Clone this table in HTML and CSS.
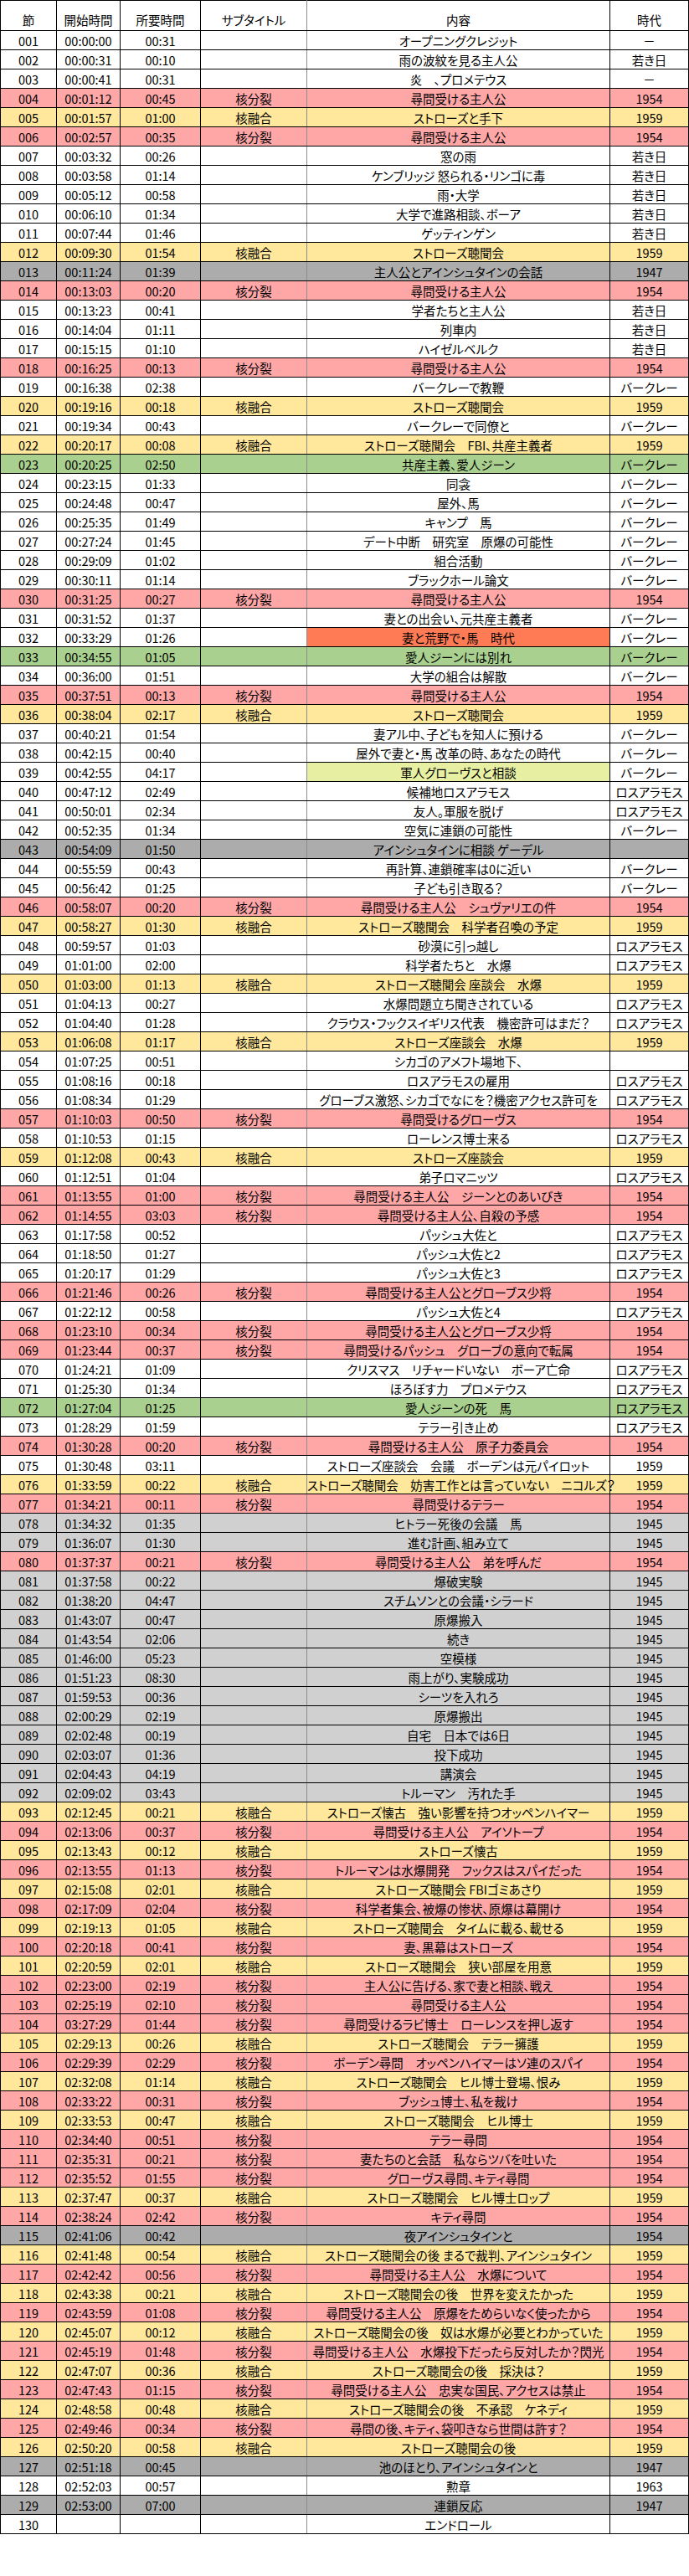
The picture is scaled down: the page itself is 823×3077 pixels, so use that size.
FILE: index.html
```html
<!DOCTYPE html>
<html lang="ja">
<head>
<meta charset="utf-8">
<title>シーン一覧</title>
<link rel="stylesheet" href="styles.css">
</head>
<body>
<table class="scenes">
<colgroup><col class="c-no"><col class="c-start"><col class="c-dur"><col class="c-sub"><col class="c-desc"><col class="c-era"></colgroup>
<thead>
<tr class="head"><th>節</th><th>開始時間</th><th>所要時間</th><th>サブタイトル</th><th>内容</th><th>時代</th></tr>
</thead>
<tbody>
<tr><td>001</td><td>00:00:00</td><td>00:31</td><td></td><td>オープニングクレジット</td><td>－</td></tr>
<tr><td>002</td><td>00:00:31</td><td>00:10</td><td></td><td>雨の波紋を見る主人公</td><td>若き日</td></tr>
<tr><td>003</td><td>00:00:41</td><td>00:31</td><td></td><td>炎　、プロメテウス</td><td>－</td></tr>
<tr class="r-p"><td>004</td><td>00:01:12</td><td>00:45</td><td>核分裂</td><td>尋問受ける主人公</td><td>1954</td></tr>
<tr class="r-y"><td>005</td><td>00:01:57</td><td>01:00</td><td>核融合</td><td>ストローズと手下</td><td>1959</td></tr>
<tr class="r-p"><td>006</td><td>00:02:57</td><td>00:35</td><td>核分裂</td><td>尋問受ける主人公</td><td>1954</td></tr>
<tr><td>007</td><td>00:03:32</td><td>00:26</td><td></td><td>窓の雨</td><td>若き日</td></tr>
<tr><td>008</td><td>00:03:58</td><td>01:14</td><td></td><td>ケンブリッジ 怒られる・リンゴに毒</td><td>若き日</td></tr>
<tr><td>009</td><td>00:05:12</td><td>00:58</td><td></td><td>雨・大学</td><td>若き日</td></tr>
<tr><td>010</td><td>00:06:10</td><td>01:34</td><td></td><td>大学で進路相談、ボーア</td><td>若き日</td></tr>
<tr><td>011</td><td>00:07:44</td><td>01:46</td><td></td><td>ゲッティンゲン</td><td>若き日</td></tr>
<tr class="r-y"><td>012</td><td>00:09:30</td><td>01:54</td><td>核融合</td><td>ストローズ聴聞会</td><td>1959</td></tr>
<tr class="r-d"><td>013</td><td>00:11:24</td><td>01:39</td><td></td><td>主人公とアインシュタインの会話</td><td>1947</td></tr>
<tr class="r-p"><td>014</td><td>00:13:03</td><td>00:20</td><td>核分裂</td><td>尋問受ける主人公</td><td>1954</td></tr>
<tr><td>015</td><td>00:13:23</td><td>00:41</td><td></td><td>学者たちと主人公</td><td>若き日</td></tr>
<tr><td>016</td><td>00:14:04</td><td>01:11</td><td></td><td>列車内</td><td>若き日</td></tr>
<tr><td>017</td><td>00:15:15</td><td>01:10</td><td></td><td>ハイゼルベルク</td><td>若き日</td></tr>
<tr class="r-p"><td>018</td><td>00:16:25</td><td>00:13</td><td>核分裂</td><td>尋問受ける主人公</td><td>1954</td></tr>
<tr><td>019</td><td>00:16:38</td><td>02:38</td><td></td><td>バークレーで教鞭</td><td>バークレー</td></tr>
<tr class="r-y"><td>020</td><td>00:19:16</td><td>00:18</td><td>核融合</td><td>ストローズ聴聞会</td><td>1959</td></tr>
<tr><td>021</td><td>00:19:34</td><td>00:43</td><td></td><td>バークレーで同僚と</td><td>バークレー</td></tr>
<tr class="r-y"><td>022</td><td>00:20:17</td><td>00:08</td><td>核融合</td><td>ストローズ聴聞会　FBI、共産主義者</td><td>1959</td></tr>
<tr class="r-g"><td>023</td><td>00:20:25</td><td>02:50</td><td></td><td>共産主義、愛人ジーン</td><td>バークレー</td></tr>
<tr><td>024</td><td>00:23:15</td><td>01:33</td><td></td><td>同衾</td><td>バークレー</td></tr>
<tr><td>025</td><td>00:24:48</td><td>00:47</td><td></td><td>屋外、馬</td><td>バークレー</td></tr>
<tr><td>026</td><td>00:25:35</td><td>01:49</td><td></td><td>キャンプ　馬</td><td>バークレー</td></tr>
<tr><td>027</td><td>00:27:24</td><td>01:45</td><td></td><td>デート中断　研究室　原爆の可能性</td><td>バークレー</td></tr>
<tr><td>028</td><td>00:29:09</td><td>01:02</td><td></td><td>組合活動</td><td>バークレー</td></tr>
<tr><td>029</td><td>00:30:11</td><td>01:14</td><td></td><td>ブラックホール論文</td><td>バークレー</td></tr>
<tr class="r-p"><td>030</td><td>00:31:25</td><td>00:27</td><td>核分裂</td><td>尋問受ける主人公</td><td>1954</td></tr>
<tr><td>031</td><td>00:31:52</td><td>01:37</td><td></td><td>妻との出会い、元共産主義者</td><td>バークレー</td></tr>
<tr><td>032</td><td>00:33:29</td><td>01:26</td><td></td><td class="c-orange">妻と荒野で・馬　時代</td><td>バークレー</td></tr>
<tr class="r-g"><td>033</td><td>00:34:55</td><td>01:05</td><td></td><td>愛人ジーンには別れ</td><td>バークレー</td></tr>
<tr><td>034</td><td>00:36:00</td><td>01:51</td><td></td><td>大学の組合は解散</td><td>バークレー</td></tr>
<tr class="r-p"><td>035</td><td>00:37:51</td><td>00:13</td><td>核分裂</td><td>尋問受ける主人公</td><td>1954</td></tr>
<tr class="r-y"><td>036</td><td>00:38:04</td><td>02:17</td><td>核融合</td><td>ストローズ聴聞会</td><td>1959</td></tr>
<tr><td>037</td><td>00:40:21</td><td>01:54</td><td></td><td>妻アル中、子どもを知人に預ける</td><td>バークレー</td></tr>
<tr><td>038</td><td>00:42:15</td><td>00:40</td><td></td><td>屋外で妻と・馬 改革の時、あなたの時代</td><td>バークレー</td></tr>
<tr><td>039</td><td>00:42:55</td><td>04:17</td><td></td><td class="c-lime">軍人グローヴスと相談</td><td>バークレー</td></tr>
<tr><td>040</td><td>00:47:12</td><td>02:49</td><td></td><td>候補地ロスアラモス</td><td>ロスアラモス</td></tr>
<tr><td>041</td><td>00:50:01</td><td>02:34</td><td></td><td>友人。軍服を脱げ</td><td>ロスアラモス</td></tr>
<tr><td>042</td><td>00:52:35</td><td>01:34</td><td></td><td>空気に連鎖の可能性</td><td>バークレー</td></tr>
<tr class="r-d"><td>043</td><td>00:54:09</td><td>01:50</td><td></td><td>アインシュタインに相談 ゲーデル</td><td></td></tr>
<tr><td>044</td><td>00:55:59</td><td>00:43</td><td></td><td>再計算、連鎖確率は0に近い</td><td>バークレー</td></tr>
<tr><td>045</td><td>00:56:42</td><td>01:25</td><td></td><td>子ども引き取る？</td><td>バークレー</td></tr>
<tr class="r-p"><td>046</td><td>00:58:07</td><td>00:20</td><td>核分裂</td><td>尋問受ける主人公　シュヴァリエの件</td><td>1954</td></tr>
<tr class="r-y"><td>047</td><td>00:58:27</td><td>01:30</td><td>核融合</td><td>ストローズ聴聞会　科学者召喚の予定</td><td>1959</td></tr>
<tr><td>048</td><td>00:59:57</td><td>01:03</td><td></td><td>砂漠に引っ越し</td><td>ロスアラモス</td></tr>
<tr><td>049</td><td>01:01:00</td><td>02:00</td><td></td><td>科学者たちと　水爆</td><td>ロスアラモス</td></tr>
<tr class="r-y"><td>050</td><td>01:03:00</td><td>01:13</td><td>核融合</td><td>ストローズ聴聞会 座談会　水爆</td><td>1959</td></tr>
<tr><td>051</td><td>01:04:13</td><td>00:27</td><td></td><td>水爆問題立ち聞きされている</td><td>ロスアラモス</td></tr>
<tr><td>052</td><td>01:04:40</td><td>01:28</td><td></td><td>クラウス・フックスイギリス代表　機密許可はまだ？</td><td>ロスアラモス</td></tr>
<tr class="r-y"><td>053</td><td>01:06:08</td><td>01:17</td><td>核融合</td><td>ストローズ座談会　水爆</td><td>1959</td></tr>
<tr><td>054</td><td>01:07:25</td><td>00:51</td><td></td><td>シカゴのアメフト場地下、</td><td></td></tr>
<tr><td>055</td><td>01:08:16</td><td>00:18</td><td></td><td>ロスアラモスの雇用</td><td>ロスアラモス</td></tr>
<tr><td>056</td><td>01:08:34</td><td>01:29</td><td></td><td>グローブス激怒、シカゴでなにを？機密アクセス許可を</td><td>ロスアラモス</td></tr>
<tr class="r-p"><td>057</td><td>01:10:03</td><td>00:50</td><td>核分裂</td><td>尋問受けるグローヴス</td><td>1954</td></tr>
<tr><td>058</td><td>01:10:53</td><td>01:15</td><td></td><td>ローレンス博士来る</td><td>ロスアラモス</td></tr>
<tr class="r-y"><td>059</td><td>01:12:08</td><td>00:43</td><td>核融合</td><td>ストローズ座談会</td><td>1959</td></tr>
<tr><td>060</td><td>01:12:51</td><td>01:04</td><td></td><td>弟子ロマニッツ</td><td>ロスアラモス</td></tr>
<tr class="r-p"><td>061</td><td>01:13:55</td><td>01:00</td><td>核分裂</td><td>尋問受ける主人公　ジーンとのあいびき</td><td>1954</td></tr>
<tr class="r-p"><td>062</td><td>01:14:55</td><td>03:03</td><td>核分裂</td><td>尋問受ける主人公、自殺の予感</td><td>1954</td></tr>
<tr><td>063</td><td>01:17:58</td><td>00:52</td><td></td><td>パッシュ大佐と</td><td>ロスアラモス</td></tr>
<tr><td>064</td><td>01:18:50</td><td>01:27</td><td></td><td>パッシュ大佐と2</td><td>ロスアラモス</td></tr>
<tr><td>065</td><td>01:20:17</td><td>01:29</td><td></td><td>パッシュ大佐と3</td><td>ロスアラモス</td></tr>
<tr class="r-p"><td>066</td><td>01:21:46</td><td>00:26</td><td>核分裂</td><td>尋問受ける主人公とグローブス少将</td><td>1954</td></tr>
<tr><td>067</td><td>01:22:12</td><td>00:58</td><td></td><td>パッシュ大佐と4</td><td>ロスアラモス</td></tr>
<tr class="r-p"><td>068</td><td>01:23:10</td><td>00:34</td><td>核分裂</td><td>尋問受ける主人公とグローブス少将</td><td>1954</td></tr>
<tr class="r-p"><td>069</td><td>01:23:44</td><td>00:37</td><td>核分裂</td><td>尋問受けるパッシュ　グローブの意向で転属</td><td>1954</td></tr>
<tr><td>070</td><td>01:24:21</td><td>01:09</td><td></td><td>クリスマス　リチャードいない　ボーア亡命</td><td>ロスアラモス</td></tr>
<tr><td>071</td><td>01:25:30</td><td>01:34</td><td></td><td>ほろぼす力　プロメテウス</td><td>ロスアラモス</td></tr>
<tr class="r-g"><td>072</td><td>01:27:04</td><td>01:25</td><td></td><td>愛人ジーンの死　馬</td><td>ロスアラモス</td></tr>
<tr><td>073</td><td>01:28:29</td><td>01:59</td><td></td><td>テラー引き止め</td><td>ロスアラモス</td></tr>
<tr class="r-p"><td>074</td><td>01:30:28</td><td>00:20</td><td>核分裂</td><td>尋問受ける主人公　原子力委員会</td><td>1954</td></tr>
<tr><td>075</td><td>01:30:48</td><td>03:11</td><td></td><td>ストローズ座談会　会議　ボーデンは元パイロット</td><td>1959</td></tr>
<tr class="r-y"><td>076</td><td>01:33:59</td><td>00:22</td><td>核融合</td><td>ストローズ聴聞会　妨害工作とは言っていない　ニコルズ？</td><td>1959</td></tr>
<tr class="r-p"><td>077</td><td>01:34:21</td><td>00:11</td><td>核分裂</td><td>尋問受けるテラー</td><td>1954</td></tr>
<tr class="r-l"><td>078</td><td>01:34:32</td><td>01:35</td><td></td><td>ヒトラー死後の会議　馬</td><td>1945</td></tr>
<tr class="r-l"><td>079</td><td>01:36:07</td><td>01:30</td><td></td><td>進む計画、組み立て</td><td>1945</td></tr>
<tr class="r-p"><td>080</td><td>01:37:37</td><td>00:21</td><td>核分裂</td><td>尋問受ける主人公　弟を呼んだ</td><td>1954</td></tr>
<tr class="r-l"><td>081</td><td>01:37:58</td><td>00:22</td><td></td><td>爆破実験</td><td>1945</td></tr>
<tr class="r-l"><td>082</td><td>01:38:20</td><td>04:47</td><td></td><td>スチムソンとの会議・シラード</td><td>1945</td></tr>
<tr class="r-l"><td>083</td><td>01:43:07</td><td>00:47</td><td></td><td>原爆搬入</td><td>1945</td></tr>
<tr class="r-l"><td>084</td><td>01:43:54</td><td>02:06</td><td></td><td>続き</td><td>1945</td></tr>
<tr class="r-l"><td>085</td><td>01:46:00</td><td>05:23</td><td></td><td>空模様</td><td>1945</td></tr>
<tr class="r-l"><td>086</td><td>01:51:23</td><td>08:30</td><td></td><td>雨上がり、実験成功</td><td>1945</td></tr>
<tr class="r-l"><td>087</td><td>01:59:53</td><td>00:36</td><td></td><td>シーツを入れろ</td><td>1945</td></tr>
<tr class="r-l"><td>088</td><td>02:00:29</td><td>02:19</td><td></td><td>原爆搬出</td><td>1945</td></tr>
<tr class="r-l"><td>089</td><td>02:02:48</td><td>00:19</td><td></td><td>自宅　日本では6日</td><td>1945</td></tr>
<tr class="r-l"><td>090</td><td>02:03:07</td><td>01:36</td><td></td><td>投下成功</td><td>1945</td></tr>
<tr class="r-l"><td>091</td><td>02:04:43</td><td>04:19</td><td></td><td>講演会</td><td>1945</td></tr>
<tr class="r-l"><td>092</td><td>02:09:02</td><td>03:43</td><td></td><td>トルーマン　汚れた手</td><td>1945</td></tr>
<tr class="r-y"><td>093</td><td>02:12:45</td><td>00:21</td><td>核融合</td><td>ストローズ懐古　強い影響を持つオッペンハイマー</td><td>1959</td></tr>
<tr class="r-p"><td>094</td><td>02:13:06</td><td>00:37</td><td>核分裂</td><td>尋問受ける主人公　アイソトープ</td><td>1954</td></tr>
<tr class="r-y"><td>095</td><td>02:13:43</td><td>00:12</td><td>核融合</td><td>ストローズ懐古</td><td>1959</td></tr>
<tr class="r-p"><td>096</td><td>02:13:55</td><td>01:13</td><td>核分裂</td><td>トルーマンは水爆開発　フックスはスパイだった</td><td>1954</td></tr>
<tr class="r-y"><td>097</td><td>02:15:08</td><td>02:01</td><td>核融合</td><td>ストローズ聴聞会 FBIゴミあさり</td><td>1959</td></tr>
<tr class="r-p"><td>098</td><td>02:17:09</td><td>02:04</td><td>核分裂</td><td>科学者集会、被爆の惨状、原爆は幕開け</td><td>1954</td></tr>
<tr class="r-y"><td>099</td><td>02:19:13</td><td>01:05</td><td>核融合</td><td>ストローズ聴聞会　タイムに載る、載せる</td><td>1959</td></tr>
<tr class="r-p"><td>100</td><td>02:20:18</td><td>00:41</td><td>核分裂</td><td>妻、黒幕はストローズ</td><td>1954</td></tr>
<tr class="r-y"><td>101</td><td>02:20:59</td><td>02:01</td><td>核融合</td><td>ストローズ聴聞会　狭い部屋を用意</td><td>1959</td></tr>
<tr class="r-p"><td>102</td><td>02:23:00</td><td>02:19</td><td>核分裂</td><td>主人公に告げる、家で妻と相談、戦え</td><td>1954</td></tr>
<tr class="r-p"><td>103</td><td>02:25:19</td><td>02:10</td><td>核分裂</td><td>尋問受ける主人公</td><td>1954</td></tr>
<tr class="r-p"><td>104</td><td>03:27:29</td><td>01:44</td><td>核分裂</td><td>尋問受けるラビ博士　ローレンスを押し返す</td><td>1954</td></tr>
<tr class="r-y"><td>105</td><td>02:29:13</td><td>00:26</td><td>核融合</td><td>ストローズ聴聞会　テラー擁護</td><td>1959</td></tr>
<tr class="r-p"><td>106</td><td>02:29:39</td><td>02:29</td><td>核分裂</td><td>ボーデン尋問　オッペンハイマーはソ連のスパイ</td><td>1954</td></tr>
<tr class="r-y"><td>107</td><td>02:32:08</td><td>01:14</td><td>核融合</td><td>ストローズ聴聞会　ヒル博士登場、恨み</td><td>1959</td></tr>
<tr class="r-p"><td>108</td><td>02:33:22</td><td>00:31</td><td>核分裂</td><td>ブッシュ博士、私を裁け</td><td>1954</td></tr>
<tr class="r-y"><td>109</td><td>02:33:53</td><td>00:47</td><td>核融合</td><td>ストローズ聴聞会　ヒル博士</td><td>1959</td></tr>
<tr class="r-p"><td>110</td><td>02:34:40</td><td>00:51</td><td>核分裂</td><td>テラー尋問</td><td>1954</td></tr>
<tr class="r-p"><td>111</td><td>02:35:31</td><td>00:21</td><td>核分裂</td><td>妻たちのと会話　私ならツバを吐いた</td><td>1954</td></tr>
<tr class="r-p"><td>112</td><td>02:35:52</td><td>01:55</td><td>核分裂</td><td>グローヴス尋問、キティ尋問</td><td>1954</td></tr>
<tr class="r-y"><td>113</td><td>02:37:47</td><td>00:37</td><td>核融合</td><td>ストローズ聴聞会　ヒル博士ロップ</td><td>1959</td></tr>
<tr class="r-p"><td>114</td><td>02:38:24</td><td>02:42</td><td>核分裂</td><td>キティ尋問</td><td>1954</td></tr>
<tr class="r-d"><td>115</td><td>02:41:06</td><td>00:42</td><td></td><td>夜アインシュタインと</td><td>1954</td></tr>
<tr class="r-y"><td>116</td><td>02:41:48</td><td>00:54</td><td>核融合</td><td>ストローズ聴聞会の後 まるで裁判、アインシュタイン</td><td>1959</td></tr>
<tr class="r-p"><td>117</td><td>02:42:42</td><td>00:56</td><td>核分裂</td><td>尋問受ける主人公　水爆について</td><td>1954</td></tr>
<tr class="r-y"><td>118</td><td>02:43:38</td><td>00:21</td><td>核融合</td><td>ストローズ聴聞会の後　世界を変えたかった</td><td>1959</td></tr>
<tr class="r-p"><td>119</td><td>02:43:59</td><td>01:08</td><td>核分裂</td><td>尋問受ける主人公　原爆をためらいなく使ったから</td><td>1954</td></tr>
<tr class="r-y"><td>120</td><td>02:45:07</td><td>00:12</td><td>核融合</td><td>ストローズ聴聞会の後　奴は水爆が必要とわかっていた</td><td>1959</td></tr>
<tr class="r-p"><td>121</td><td>02:45:19</td><td>01:48</td><td>核分裂</td><td>尋問受ける主人公　水爆投下だったら反対したか？閃光</td><td>1954</td></tr>
<tr class="r-y"><td>122</td><td>02:47:07</td><td>00:36</td><td>核融合</td><td>ストローズ聴聞会の後　採決は？</td><td>1959</td></tr>
<tr class="r-p"><td>123</td><td>02:47:43</td><td>01:15</td><td>核分裂</td><td>尋問受ける主人公　忠実な国民、アクセスは禁止</td><td>1954</td></tr>
<tr class="r-y"><td>124</td><td>02:48:58</td><td>00:48</td><td>核融合</td><td>ストローズ聴聞会の後　不承認　ケネディ</td><td>1959</td></tr>
<tr class="r-p"><td>125</td><td>02:49:46</td><td>00:34</td><td>核分裂</td><td>尋問の後、キティ、袋叩きなら世間は許す？</td><td>1954</td></tr>
<tr class="r-y"><td>126</td><td>02:50:20</td><td>00:58</td><td>核融合</td><td>ストローズ聴聞会の後</td><td>1959</td></tr>
<tr class="r-d"><td>127</td><td>02:51:18</td><td>00:45</td><td></td><td>池のほとり、アインシュタインと</td><td>1947</td></tr>
<tr><td>128</td><td>02:52:03</td><td>00:57</td><td></td><td>勲章</td><td>1963</td></tr>
<tr class="r-d"><td>129</td><td>02:53:00</td><td>07:00</td><td></td><td>連鎖反応</td><td>1947</td></tr>
<tr><td>130</td><td></td><td></td><td></td><td>エンドロール</td><td></td></tr>
</tbody>
</table>
</body>
</html>
```

FILE: styles.css
```css
html, body {
  margin: 0;
  padding: 0;
  background: #ffffff;
}

.scenes {
  border-collapse: collapse;
  table-layout: fixed;
  width: 822px;
  font-family: "Noto Sans CJK JP", "Noto Sans", sans-serif;
  font-size: 14.5px;
  font-feature-settings: "palt" 1;
  color: #000000;
}

.c-no { width: 67px; }
.c-start { width: 76px; }
.c-dur { width: 96px; }
.c-sub { width: 127px; }
.c-desc { width: 362px; }
.c-era { width: 94px; }

.scenes th,
.scenes td {
  border: 1px solid #000000;
  padding: 1px 0 0 0;
  text-align: center;
  vertical-align: middle;
  white-space: nowrap;
  line-height: 21px;
  font-weight: normal;
}

.scenes th:nth-child(4),
.scenes td:nth-child(4) {
  border-right-color: #8c8c8c;
}

.scenes tr {
  height: 23px;
}

.scenes tr.head {
  height: 36px;
}

.scenes tr.head th {
  vertical-align: bottom;
  padding: 0 0 2px 0;
}

.r-p td { background: #ffa7a7; }
.r-y td { background: #ffe79b; }
.r-g td { background: #a9d08e; }
.r-d td { background: #acacac; }
.r-l td { background: #d0d0d0; }

.scenes td.c-orange { background: #ff7b55; }
.scenes td.c-lime { background: #e6efa2; }
```
